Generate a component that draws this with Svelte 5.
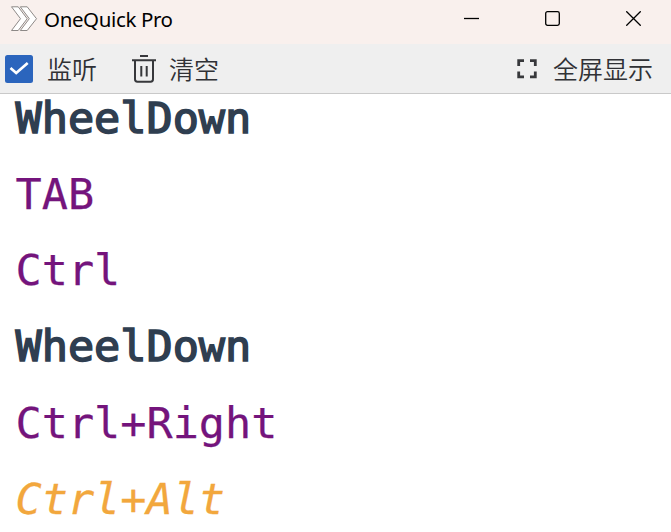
<script>
  const events = [
    { text: 'WheelDown', kind: 'wheel' },
    { text: 'TAB', kind: 'key' },
    { text: 'Ctrl', kind: 'key' },
    { text: 'WheelDown', kind: 'wheel' },
    { text: 'Ctrl+Right', kind: 'key' },
    { text: 'Ctrl+Alt', kind: 'modifier' },
  ];
</script>

<div class="window">
  <header>
    <svg class="logo" width="28" height="26" viewBox="0 0 28 26">
      <g fill="#fff" stroke="#8d8987" stroke-width="1">
        <path d="M1.5.8H8.2L17.2 12.7 8.2 24.5H1.5L10.5 12.7Z" />
        <path d="M10.3.8H17.2L26.5 12.7 17.2 24.5H10.3L19.3 12.7Z" />
      </g>
    </svg>
    <span class="title">OneQuick Pro</span>
    <div class="controls">
      <svg width="15" height="15" viewBox="0 0 15 15"><path d="M0 7.5H15" /></svg>
      <svg width="15" height="15" viewBox="0 0 15 15"><rect x=".7" y=".7" width="13.6" height="13.6" rx="1.8" /></svg>
      <svg width="15" height="15" viewBox="0 0 15 15"><path d="M.3.3 14.7 14.7M14.7.3.3 14.7" /></svg>
    </div>
  </header>

  <div class="toolbar">
    <svg class="check" width="28" height="28" viewBox="0 0 28 28">
      <rect width="28" height="28" rx="2.5" fill="#2b65bd" />
      <path d="M5.5 13 11.2 18 22.7 8" fill="none" stroke="#fff" stroke-width="2.7" />
    </svg>
    <span class="listen">监听</span>
    <svg class="trash" width="24" height="28" viewBox="0 0 24 28" fill="none" stroke="#37383b" stroke-width="2">
      <path d="M0 5.3H24M8 1H16M3 5.3V24.3Q3 26.7 5.4 26.7H18.6Q21 26.7 21 24.3V5.3M9.3 11V21.5M14.7 11V21.5" />
    </svg>
    <span>清空</span>
    <svg class="expand" width="20" height="20" viewBox="0 0 20 20" fill="none" stroke="#37383b" stroke-width="2.8">
      <path d="M1.7 7V1.7H7M13 1.7H18.3V7M18.3 12.5V17.8H13M7 17.8H1.7V12.5" />
    </svg>
    <span class="full">全屏显示</span>
  </div>

  <main>
    {#each events as event}
      <div class="event {event.kind}">{event.text}</div>
    {/each}
  </main>
</div>

<style>
  .window {
    display: flex;
    flex-direction: column;
    width: 671px;
    height: 532px;
    overflow: hidden;
    background: #fff;
  }
  header {
    display: flex;
    align-items: center;
    flex: none;
    height: 44px;
    box-sizing: border-box;
    padding: 0 30px 7px 10px;
    background: #f9f0ed;
  }
  .logo {
    margin-right: 6px;
  }
  .title {
    font: 20.5px/30px "Noto Sans", sans-serif;
    letter-spacing: -0.38px;
    color: #000;
    white-space: nowrap;
  }
  .controls {
    display: flex;
    gap: 66px;
    margin-left: auto;
    fill: none;
    stroke: #000;
    stroke-width: 1.3;
  }
  .toolbar {
    display: flex;
    align-items: center;
    flex: none;
    height: 50px;
    box-sizing: border-box;
    padding: 0 18px 0 5px;
    background: #efefef;
    border-bottom: 1px solid #c9c9c9;
    font: 25px/36px "Noto Sans CJK SC", sans-serif;
    font-weight: 350;
    color: #303135;
    white-space: nowrap;
  }
  .toolbar span {
    padding-bottom: 2px;
  }
  .listen {
    margin-left: 14px;
  }
  .trash {
    margin: 0 13px 0 35px;
  }
  .expand {
    margin: 0 16px 0 auto;
  }
  main {
    flex: 1;
    min-height: 0;
    padding-left: 15.5px;
  }
  .event {
    height: 76.15px;
    font: 43.5px/48px "DejaVu Sans Mono", monospace;
    white-space: pre;
  }
  .wheel {
    color: #2f3e50;
    -webkit-text-stroke: 1.6px #2f3e50;
  }
  .key {
    color: #74147c;
    -webkit-text-stroke: 0.25px #74147c;
  }
  .modifier {
    font-style: italic;
    color: #f2a73d;
    -webkit-text-stroke: 0.3px #f2a73d;
  }
</style>
